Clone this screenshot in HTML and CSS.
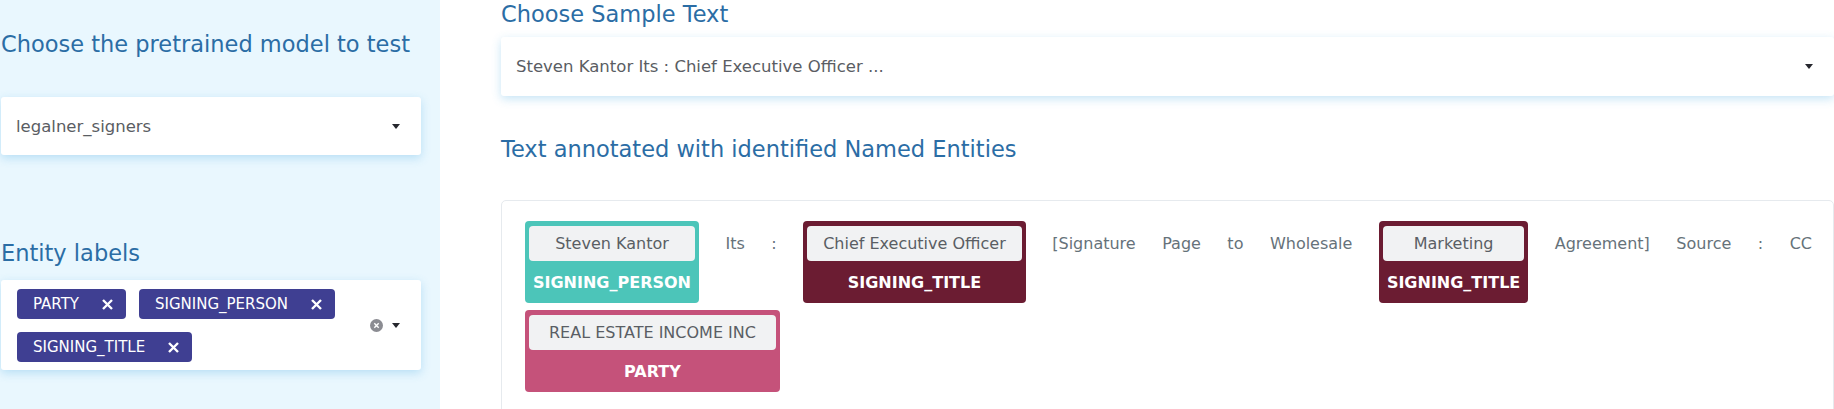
FILE: index.html
```html
<!DOCTYPE html>
<html lang="en">
<head>
    <meta charset="UTF-8">
    <meta name="viewport" content="width=device-width, initial-scale=1.0">
    <title>Legal NER - Signers</title>

    <link rel="stylesheet" href="styles.css">
</head>
<body>
    <aside class="sidebar">
        <h3 class="title">Choose the pretrained model to test</h3>
        <div class="select model-select">
            <span class="select-value">legalner_signers</span>
            <span class="caret"></span>
        </div>

        <h3 class="title labels-title">Entity labels</h3>
        <div class="select multi-select">
            <div class="tags">
                <span class="tag">PARTY<svg class="tag-x" width="11" height="11" viewBox="0 0 11 11"><path d="M1 1L10 10M10 1L1 10" /></svg></span>
                <span class="tag">SIGNING_PERSON<svg class="tag-x" width="11" height="11" viewBox="0 0 11 11"><path d="M1 1L10 10M10 1L1 10" /></svg></span>
                <span class="tag">SIGNING_TITLE<svg class="tag-x" width="11" height="11" viewBox="0 0 11 11"><path d="M1 1L10 10M10 1L1 10" /></svg></span>
            </div>
            <div class="select-icons">
                <svg class="clear" width="13" height="13" viewBox="0 0 13 13"><circle cx="6.5" cy="6.5" r="6.5" /><path d="M4.3 4.3L8.7 8.7M8.7 4.3L4.3 8.7" /></svg>
                <span class="caret"></span>
            </div>
        </div>
    </aside>

    <main class="content">
        <h3 class="title">Choose Sample Text</h3>
        <div class="select sample-select">
            <span class="select-value">Steven Kantor Its : Chief Executive Officer ...</span>
            <span class="caret"></span>
        </div>

        <h3 class="title annotated-title">Text annotated with identified Named Entities</h3>
        <div class="entities">
            <span class="entity person"><span class="entity-name">Steven Kantor</span><span class="entity-type">SIGNING_PERSON</span></span>
            Its : 
            <span class="entity title-ent"><span class="entity-name">Chief Executive Officer</span><span class="entity-type">SIGNING_TITLE</span></span>
            [Signature Page to Wholesale
            <span class="entity title-ent"><span class="entity-name">Marketing</span><span class="entity-type">SIGNING_TITLE</span></span>
            Agreement] Source : CC
            <span class="entity party"><span class="entity-name">REAL ESTATE INCOME INC</span><span class="entity-type">PARTY</span></span>
        </div>
    </main>
</body>
</html>
```

FILE: styles.css
```css
body {
    margin: 0;
    display: flex;
    min-height: 409px;
    font-family: "DejaVu Sans", sans-serif;
    background-color: #ffffff;
}

.sidebar {
    width: 440px;
    flex-shrink: 0;
    box-sizing: border-box;
    padding: 31px 19px 0 1px;
    background-color: #e9f7fe;
}

.content {
    flex: 1;
    min-width: 0;
    padding: 1px 0 0 61px;
}

.title {
    margin: 0;
    font-size: 22.5px;
    line-height: 27px;
    font-weight: normal;
    color: #2b6da5;
}

.labels-title { margin-top: 85px; }
.annotated-title { margin-top: 40px; }

.select {
    display: flex;
    align-items: center;
    box-sizing: border-box;
    background-color: #ffffff;
    border-radius: 3px;
    box-shadow: 0 3px 10px rgba(70, 170, 225, 0.3);
}

.select-value {
    flex: 1;
    font-size: 16.5px;
    color: #5a5d63;
}

.model-select {
    height: 58px;
    margin-top: 39px;
    padding: 0 21px 0 15px;
}

.sample-select {
    height: 59px;
    margin-top: 9px;
    padding: 0 21px 0 15px;
}

.caret {
    width: 0;
    height: 0;
    border-left: 4.5px solid transparent;
    border-right: 4.5px solid transparent;
    border-top: 5px solid #26272e;
}

.multi-select {
    min-height: 90px;
    margin-top: 13px;
    padding: 9px 21px 8px 16px;
}

.tags {
    flex: 1;
    display: flex;
    flex-wrap: wrap;
    gap: 13px;
}

.tag {
    display: flex;
    align-items: center;
    height: 30px;
    padding: 0 13px 0 16px;
    border-radius: 4px;
    background-color: #3f3f92;
    color: #ffffff;
    font-size: 15px;
}

.tag-x {
    margin-left: 23px;
    stroke: #ffffff;
    stroke-width: 2.4;
    fill: none;
}

.select-icons {
    display: flex;
    align-items: center;
    gap: 9px;
}

.clear circle { fill: #8b8c92; }
.clear path { stroke: #ffffff; stroke-width: 1.4; fill: none; }

.entities {
    margin-top: 37px;
    padding: 20px 21px 20px 23px;
    border: 1px solid #e6eaee;
    border-radius: 5px;
    text-align: justify;
    word-spacing: 3px;
    font-size: 16px;
    line-height: 24px;
    color: #66727a;
}

.entity {
    display: inline-grid;
    vertical-align: baseline;
    margin-bottom: 7px;
    padding-top: 5px;
    border-radius: 4px;
    text-align: center;
    word-spacing: 0;
}

.entity-name {
    margin: 0 4px;
    padding: 0 16px;
    line-height: 35px;
    border-radius: 4px;
    background-color: #f1f2f3;
    color: #5a5e64;
    white-space: nowrap;
}

.party .entity-name { padding: 0 20px; }

.entity-type {
    padding: 2px 8px 0;
    line-height: 40px;
    font-weight: bold;
    color: #ffffff;
    white-space: nowrap;
}

.person { background-color: #4cc5b9; }
.title-ent { background-color: #6b1c32; }
.party { background-color: #c5527a; }
```
